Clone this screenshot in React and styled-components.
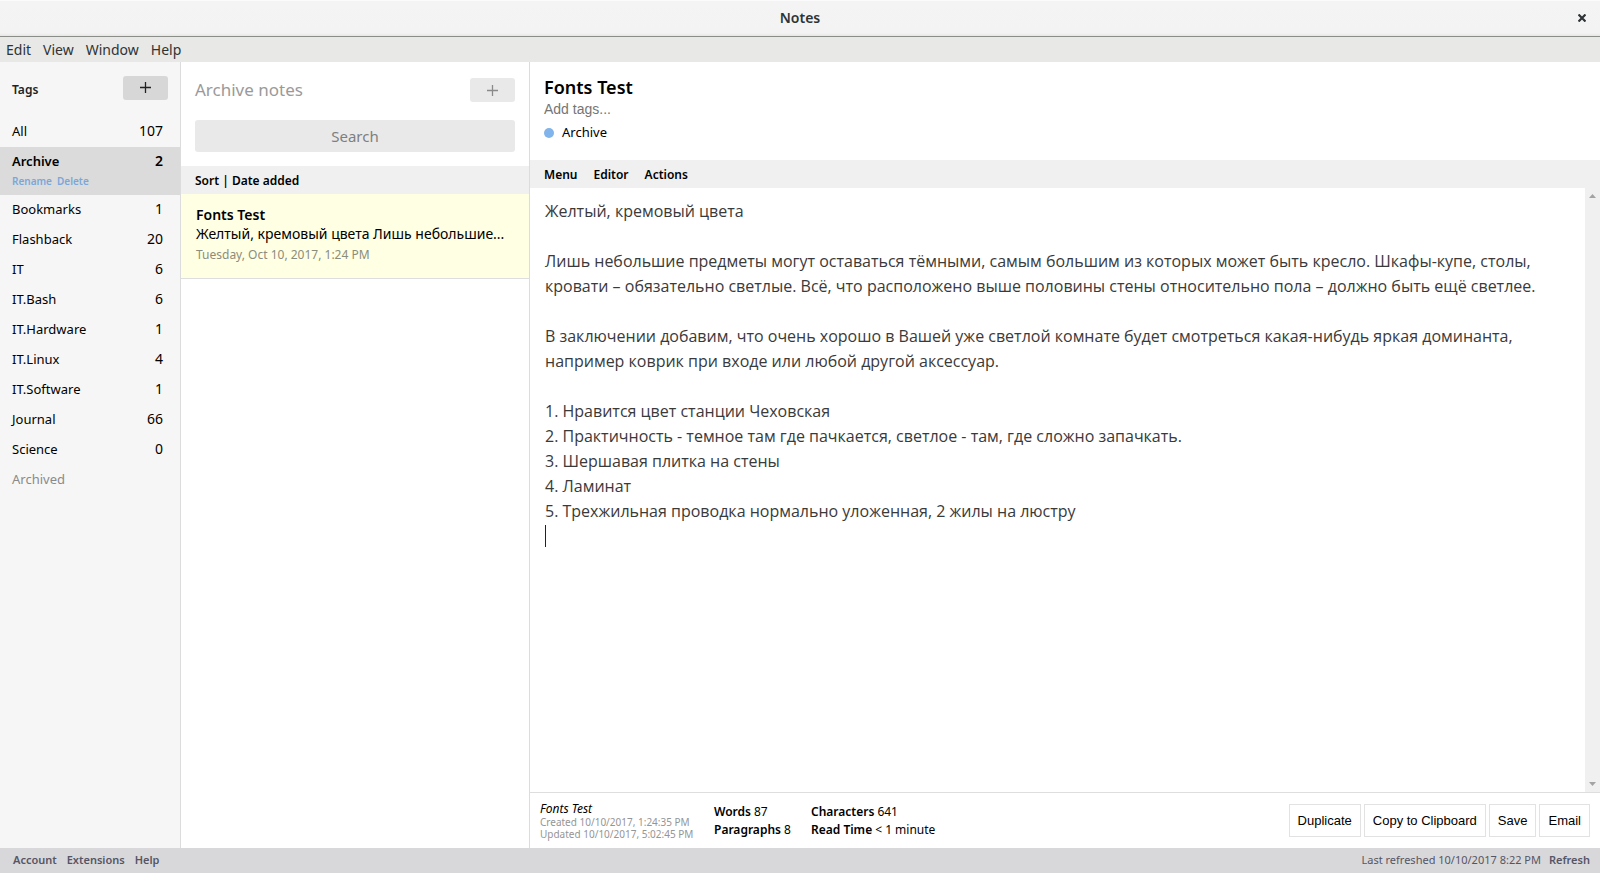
import React, { useState } from "react";
import styled, { createGlobalStyle, css } from "styled-components";

const uiFont = `"Noto Sans", "Open Sans", sans-serif`;
const noteFont = `"Open Sans", "Noto Sans", sans-serif`;
const controlFont = `"Liberation Sans", Arial, sans-serif`;

const GlobalStyle = createGlobalStyle`
  *, *::before, *::after { box-sizing: border-box; }
  body { margin: 0; font-family: ${uiFont}; color: #000; background: #fff; }
  button, input, textarea { font-family: inherit; color: inherit; }
  h1, h2, p, ul, dl, dd { margin: 0; padding: 0; }
  ul { list-style: none; }
`;

const Window = styled.div`
  display: flex;
  flex-direction: column;
  height: 100vh;
`;

const TitleBar = styled.header`
  display: grid;
  grid-template-columns: 36px 1fr 36px;
  align-items: center;
  height: 37px;
  flex: none;
  padding-bottom: 2px;
  background: linear-gradient(#f4f4f4 0, #f3f3f3 32px, #e6e6e4 35px);
  border-top: 1px solid #fbfbfb;
  border-bottom: 1px solid #8b8e88;
`;

const WindowTitle = styled.h1`
  grid-column: 2;
  text-align: center;
  font-size: 14px;
  line-height: 20px;
  font-weight: 600;
  color: #2e3436;
`;

const PlainButton = styled.button`
  padding: 0;
  border: 0;
  background: none;
  font-size: inherit;
  font-weight: inherit;
  line-height: inherit;
  cursor: pointer;
`;

const CloseButton = styled(PlainButton)`
  display: flex;
  justify-content: center;
  color: #2e3436;
`;

const MenuBar = styled.nav`
  display: flex;
  gap: 12px;
  align-items: center;
  height: 25px;
  flex: none;
  padding: 0 6px;
  font-size: 14px;
  line-height: 20px;
  color: #2e3436;
  background: #e8e8e6;
`;

const Columns = styled.div`
  display: flex;
  flex: 1;
  min-height: 0;
`;

const Sidebar = styled.aside`
  flex: none;
  width: 181px;
  background: #f6f6f6;
  border-right: 1px solid #dcdcdc;
`;

const SidebarHeader = styled.div`
  display: flex;
  justify-content: space-between;
  align-items: center;
  height: 55px;
  padding: 0 12px 4px;
`;

const SidebarTitle = styled.h2`
  padding-top: 4px;
  font-size: 12px;
  line-height: 16px;
  font-weight: 600;
  color: #222;
`;

const AddButton = styled.button`
  display: flex;
  align-items: center;
  justify-content: center;
  width: 45px;
  height: 24px;
  padding: 0;
  border: 0;
  border-radius: 3px;
  cursor: pointer;
  color: ${(p) => (p.$muted ? "#8a8a8a" : "#222")};
  background: ${(p) => (p.$muted ? "#e9e9e9" : "#d7d7d7")};
`;

const TagItem = styled.li`
  padding: 0 17px 0 12px;
  font-size: 13px;
  ${(p) =>
    p.$selected &&
    css`
      height: 48px;
      font-weight: 600;
      background: #dbdbdb;
    `}
`;

const TagRow = styled.button`
  display: flex;
  justify-content: space-between;
  align-items: center;
  width: 100%;
  height: 30px;
  padding: 0 0 3px;
  border: 0;
  background: none;
  font-size: inherit;
  font-weight: inherit;
  cursor: pointer;
  color: ${(p) => (p.$muted ? "#8a8a8a" : "#000")};
`;

const TagCount = styled.span`
  font-size: 14px;
  line-height: 18px;
`;

const TagActions = styled.div`
  display: flex;
  gap: 5px;
  font-size: 10px;
  line-height: 9px;
  font-weight: 600;
  color: #7aa7d9;
`;

const ListPane = styled.section`
  flex: none;
  width: 349px;
  border-right: 1px solid #dcdcdc;
`;

const ListHeader = styled.div`
  display: flex;
  flex-direction: column;
  gap: 18px;
  height: 104px;
  padding: 16px 14px 0;
`;

const ListHeading = styled.div`
  display: flex;
  justify-content: space-between;
  align-items: center;
`;

const ListTitle = styled.h2`
  font-size: 17px;
  line-height: 24px;
  font-weight: 400;
  color: #9a9a9a;
`;

const SearchInput = styled.input`
  width: 100%;
  height: 32px;
  padding: 0;
  border: 0;
  border-radius: 3px;
  text-align: center;
  font-size: 15px;
  background: #e9e9e9;
  &::placeholder { color: #7f7f7f; opacity: 1; }
`;

const SectionBar = styled.div`
  display: flex;
  gap: 16px;
  align-items: center;
  flex: none;
  height: 28px;
  padding: 2px 14px 0;
  font-size: 12px;
  line-height: 16px;
  font-weight: 600;
  background: #f0f0f0;
`;

const NoteCell = styled.article`
  height: 85px;
  padding: 11px 15px 0;
  background: #ffffe3;
  border-bottom: 1px solid #dedede;
`;

const NoteTitle = styled.h2`
  font-size: 14px;
  line-height: 20px;
  font-weight: 600;
`;

const NotePreview = styled.p`
  font-size: 14px;
  line-height: 18px;
  white-space: nowrap;
`;

const NoteDate = styled.p`
  padding-top: 4px;
  font-size: 12px;
  line-height: 16px;
  color: #8c8c7c;
`;

const EditorPane = styled.main`
  display: flex;
  flex-direction: column;
  flex: 1;
  min-width: 0;
`;

const NoteHeader = styled.div`
  flex: none;
  height: 98px;
  padding: 13px 14px 0;
`;

const TitleInput = styled.input`
  display: block;
  width: 100%;
  height: 24px;
  padding: 0;
  border: 0;
  font-size: 18px;
  font-weight: 600;
`;

const TagsInput = styled.input`
  display: block;
  width: 100%;
  height: 20px;
  padding: 0;
  border: 0;
  font-family: ${controlFont};
  font-size: 14px;
  &::placeholder { color: #757575; opacity: 1; }
`;

const NoteTag = styled.div`
  display: flex;
  gap: 8px;
  align-items: center;
  height: 26px;
  font-size: 13px;
  line-height: 18px;
`;

const TagDot = styled.span`
  width: 10px;
  height: 10px;
  margin-top: 2px;
  border-radius: 50%;
  background: #81b4ea;
`;

const EditorArea = styled.div`
  position: relative;
  display: flex;
  flex: 1;
  min-height: 0;
`;

const NoteText = styled.textarea`
  flex: 1;
  min-width: 0;
  padding: 11px 15px;
  border: 0;
  outline: 0;
  resize: none;
  overflow: hidden;
  font-family: ${noteFont};
  font-size: 16px;
  line-height: 25px;
  color: #3a3a3a;
`;

const Caret = styled.span`
  position: absolute;
  left: 15px;
  top: 337px;
  width: 1px;
  height: 22px;
  background: #222;
`;

const ScrollTrack = styled.div`
  display: flex;
  flex-direction: column;
  justify-content: space-between;
  align-items: center;
  flex: none;
  width: 15px;
  padding: 6px 0;
  background: #f0f0f0;
`;

const NoteFooter = styled.footer`
  display: flex;
  align-items: center;
  flex: none;
  height: 56px;
  padding: 0 10px;
  border-top: 1px solid #dedede;
`;

const NoteDates = styled.div`
  width: 174px;
  font-size: 10px;
  line-height: 12px;
  color: #959595;
`;

const FooterTitle = styled.p`
  font-size: 12px;
  line-height: 14px;
  font-style: italic;
  color: #000;
`;

const Stats = styled.dl`
  display: grid;
  grid-template-columns: 97px auto;
  font-size: 12px;
  line-height: 18px;
`;

const Stat = styled.div`
  display: flex;
  gap: 3px;
  white-space: nowrap;
  dt { font-weight: 600; }
`;

const FooterActions = styled.div`
  display: flex;
  gap: 3px;
  margin-left: auto;
`;

const ActionButton = styled.button`
  height: 33px;
  padding: 0 8px;
  border: 1px solid #e2e2e2;
  background: #fff;
  font-family: ${controlFont};
  font-size: 13px;
  cursor: pointer;
`;

const StatusBar = styled.footer`
  display: flex;
  justify-content: space-between;
  align-items: center;
  flex: none;
  height: 25px;
  padding: 0 10px 2px 13px;
  font-size: 11px;
  line-height: 16px;
  color: #565565;
  background: #d8d8da;
`;

const StatusGroup = styled.div`
  display: flex;
  gap: ${(p) => p.$gap}px;
`;

const StatusLink = styled.a`
  color: inherit;
  font-weight: 600;
  text-decoration: none;
`;

const Plus = () => (
  <svg width="11" height="11" viewBox="0 0 11 11" stroke="currentColor" strokeWidth="1.3" aria-hidden="true">
    <path d="M5.5 0v11M0 5.5h11" />
  </svg>
);

const Arrow = ({ down }) => (
  <svg width="7" height="4" viewBox="0 0 7 4" fill="#a3a3a3" aria-hidden="true">
    <path d={down ? "M0 0h7L3.5 4z" : "M0 4h7L3.5 0z"} />
  </svg>
);

const tags = [
  ["All", 107],
  ["Archive", 2],
  ["Bookmarks", 1],
  ["Flashback", 20],
  ["IT", 6],
  ["IT.Bash", 6],
  ["IT.Hardware", 1],
  ["IT.Linux", 4],
  ["IT.Software", 1],
  ["Journal", 66],
  ["Science", 0],
];

const noteBody = `Желтый, кремовый цвета

Лишь небольшие предметы могут оставаться тёмными, самым большим из которых может быть кресло. Шкафы-купе, столы, кровати – обязательно светлые. Всё, что расположено выше половины стены относительно пола – должно быть ещё светлее.

В заключении добавим, что очень хорошо в Вашей уже светлой комнате будет смотреться какая-нибудь яркая доминанта, например коврик при входе или любой другой аксессуар.

1. Нравится цвет станции Чеховская
2. Практичность - темное там где пачкается, светлое - там, где сложно запачкать.
3. Шершавая плитка на стены
4. Ламинат
5. Трехжильная проводка нормально уложенная, 2 жилы на люстру
`;

export default function App() {
  const [selected, setSelected] = useState("Archive");
  const [title, setTitle] = useState("Fonts Test");
  const [body, setBody] = useState(noteBody);

  return (
    <>
      <GlobalStyle />
      <Window>
        <TitleBar>
          <WindowTitle>Notes</WindowTitle>
          <CloseButton aria-label="Close">
            <svg width="8" height="8" viewBox="0 0 8 8" stroke="currentColor" strokeWidth="2.2" aria-hidden="true">
              <path d="M0.5 0.5l7 7M7.5 0.5l-7 7" />
            </svg>
          </CloseButton>
        </TitleBar>
        <MenuBar>
          {["Edit", "View", "Window", "Help"].map((m) => (
            <PlainButton key={m}>{m}</PlainButton>
          ))}
        </MenuBar>
        <Columns>
          <Sidebar>
            <SidebarHeader>
              <SidebarTitle>Tags</SidebarTitle>
              <AddButton aria-label="Add tag"><Plus /></AddButton>
            </SidebarHeader>
            <ul>
              {tags.map(([name, count]) => (
                <TagItem key={name} $selected={name === selected}>
                  <TagRow onClick={() => setSelected(name)}>
                    <span>{name}</span>
                    <TagCount>{count}</TagCount>
                  </TagRow>
                  {name === selected && (
                    <TagActions>
                      <PlainButton>Rename</PlainButton>
                      <PlainButton>Delete</PlainButton>
                    </TagActions>
                  )}
                </TagItem>
              ))}
              <TagItem><TagRow $muted>Archived</TagRow></TagItem>
            </ul>
          </Sidebar>
          <ListPane>
            <ListHeader>
              <ListHeading>
                <ListTitle>Archive notes</ListTitle>
                <AddButton $muted aria-label="Add note"><Plus /></AddButton>
              </ListHeading>
              <SearchInput placeholder="Search" aria-label="Search" />
            </ListHeader>
            <SectionBar><PlainButton>Sort | Date added</PlainButton></SectionBar>
            <NoteCell>
              <NoteTitle>Fonts Test</NoteTitle>
              <NotePreview>Желтый, кремовый цвета Лишь небольшие...</NotePreview>
              <NoteDate>Tuesday, Oct 10, 2017, 1:24 PM</NoteDate>
            </NoteCell>
          </ListPane>
          <EditorPane>
            <NoteHeader>
              <TitleInput value={title} onChange={(e) => setTitle(e.target.value)} aria-label="Note title" />
              <TagsInput placeholder="Add tags..." aria-label="Add tags" />
              <NoteTag><TagDot />Archive</NoteTag>
            </NoteHeader>
            <SectionBar>
              <PlainButton>Menu</PlainButton>
              <PlainButton>Editor</PlainButton>
              <PlainButton>Actions</PlainButton>
            </SectionBar>
            <EditorArea>
              <NoteText value={body} onChange={(e) => setBody(e.target.value)} spellCheck={false} aria-label="Note text" />
              <Caret />
              <ScrollTrack><Arrow /><Arrow down /></ScrollTrack>
            </EditorArea>
            <NoteFooter>
              <NoteDates>
                <FooterTitle>Fonts Test</FooterTitle>
                <p>Created 10/10/2017, 1:24:35 PM</p>
                <p>Updated 10/10/2017, 5:02:45 PM</p>
              </NoteDates>
              <Stats>
                <Stat><dt>Words</dt><dd>87</dd></Stat>
                <Stat><dt>Characters</dt><dd>641</dd></Stat>
                <Stat><dt>Paragraphs</dt><dd>8</dd></Stat>
                <Stat><dt>Read Time</dt><dd>&lt; 1 minute</dd></Stat>
              </Stats>
              <FooterActions>
                <ActionButton>Duplicate</ActionButton>
                <ActionButton>Copy to Clipboard</ActionButton>
                <ActionButton>Save</ActionButton>
                <ActionButton>Email</ActionButton>
              </FooterActions>
            </NoteFooter>
          </EditorPane>
        </Columns>
        <StatusBar>
          <StatusGroup $gap={10}>
            <StatusLink href="#account">Account</StatusLink>
            <StatusLink href="#extensions">Extensions</StatusLink>
            <StatusLink href="#help">Help</StatusLink>
          </StatusGroup>
          <StatusGroup $gap={8}>
            <span>Last refreshed 10/10/2017 8:22 PM</span>
            <StatusLink href="#refresh">Refresh</StatusLink>
          </StatusGroup>
        </StatusBar>
      </Window>
    </>
  );
}
